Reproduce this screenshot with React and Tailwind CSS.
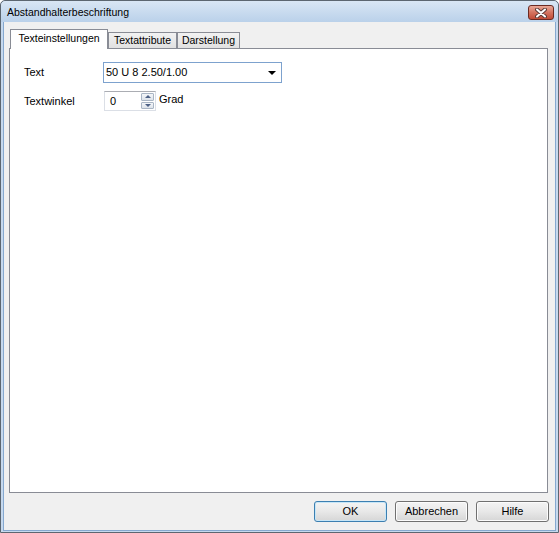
import React from "react";

function Button({ label, primary }) {
  return (
    <button
      className={`w-[73px] h-[21px] rounded-[3px] border text-[11px] text-black bg-gradient-to-b from-[#f4f4f4] via-[#e8e8e8] to-[#d6d6d6] ${
        primary
          ? "border-[#3c7fb1] shadow-[inset_0_0_0_1px_#c7e6f7]"
          : "border-[#707070] shadow-[inset_0_0_0_1px_#fcfcfc]"
      }`}
    >
      {label}
    </button>
  );
}

function Tab({ label, active, width }) {
  if (active) {
    return (
      <div
        className={`${width} h-[20px] bg-white border border-b-0 border-[#898c95] flex items-center justify-center pb-[1px]`}
      >
        {label}
      </div>
    );
  }
  return (
    <div
      className={`${width} h-[17px] border border-[#898c95] bg-gradient-to-b from-[#f2f2f2] to-[#e1e1e1] flex items-center justify-center`}
    >
      {label}
    </div>
  );
}

export default function App() {
  return (
    <div className="w-[559px] h-[533px] flex flex-col bg-[#c6d9ee] border border-[#5c6670] rounded-t-[5px] text-[11px] text-black font-['Liberation_Sans',Arial,sans-serif]">
      {/* Titelleiste */}
      <div className="h-[21px] flex items-center pl-[6px] pt-[3px] bg-gradient-to-b from-[#d9e6f4] to-[#bad1ea] rounded-t-[5px]">
        <span className="text-[10.5px]">Abstandhalterbeschriftung</span>
        <div className="ml-auto mr-[4px] -mt-[1px] w-[26px] h-[15px] rounded-[3px] border border-[#6b2a22] bg-gradient-to-b from-[#e8a797] via-[#d4735f] to-[#c14b36] flex items-center justify-center">
          <svg width="12" height="10" viewBox="0 0 12 10">
            <path
              d="M2 1.5 L10 8.5 M10 1.5 L2 8.5"
              stroke="#5a3a36"
              strokeWidth="4"
              strokeLinecap="round"
            />
            <path
              d="M2 1.5 L10 8.5 M10 1.5 L2 8.5"
              stroke="#ffffff"
              strokeWidth="2"
              strokeLinecap="round"
            />
          </svg>
        </div>
      </div>

      {/* Client-Bereich */}
      <div className="flex-1 mx-[2px] mb-[1px] border border-t-0 border-[#86a8cf] bg-[#f0f0f0] flex flex-col pt-[7px] pl-[5px] pr-[7px]">
        <div className="flex items-end pl-[1px] -mb-[1px] relative z-10 text-[10.5px]">
          <Tab label="Texteinstellungen" active width="w-[98px]" />
          <Tab label="Textattribute" width="w-[69px]" />
          <Tab label="Darstellung" width="w-[63px]" />
        </div>

        <div className="flex-1 bg-white border border-[#898c95] pt-[13px] pl-[14px]">
          <div className="flex items-center">
            <span className="w-[79px]">Text</span>
            <div className="w-[179px] h-[21px] border border-[#7da2ce] flex items-center pl-[2px] pr-[5px]">
              <span className="flex-1">50 U 8 2.50/1.00</span>
              <div className="w-0 h-0 border-l-[4px] border-r-[4px] border-t-[4px] border-l-transparent border-r-transparent border-t-black" />
            </div>
          </div>

          <div className="flex items-center mt-[8px]">
            <span className="w-[80px]">Textwinkel</span>
            <div className="w-[52px] h-[20px] border border-[#dbdfe6] border-t-[#abadb3] flex">
              <span className="flex-1 pl-[5px] leading-[18px]">0</span>
              <div className="w-[15px] flex flex-col p-[1px] gap-[1px]">
                <div className="flex-1 border border-[#a9b5c4] rounded-[1px] bg-gradient-to-b from-[#f4f6f9] to-[#dde3ea] flex items-center justify-center">
                  <div className="w-0 h-0 border-l-[3px] border-r-[3px] border-b-[3px] border-l-transparent border-r-transparent border-b-[#4d6185]" />
                </div>
                <div className="flex-1 border border-[#a9b5c4] rounded-[1px] bg-gradient-to-b from-[#f4f6f9] to-[#dde3ea] flex items-center justify-center">
                  <div className="w-0 h-0 border-l-[3px] border-r-[3px] border-t-[3px] border-l-transparent border-r-transparent border-t-[#4d6185]" />
                </div>
              </div>
            </div>
            <span className="ml-[3px] -mt-[3px]">Grad</span>
          </div>
        </div>

        <div className="flex justify-end gap-[8px] pt-[8px] pb-[8px] -mr-[1px]">
          <Button label="OK" primary />
          <Button label="Abbrechen" />
          <Button label="Hilfe" />
        </div>
      </div>
    </div>
  );
}
